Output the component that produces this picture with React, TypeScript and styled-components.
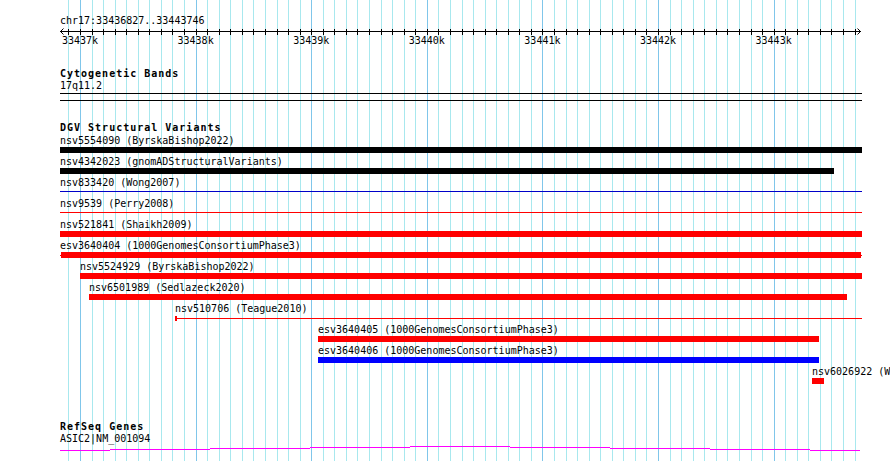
import * as React from 'react';
import styled, { createGlobalStyle } from 'styled-components';

const GlobalStyle = createGlobalStyle`
  html, body {
    margin: 0;
    padding: 0;
    background: #fff;
  }
  body {
    font-family: 'DejaVu Sans Mono', 'Liberation Mono', monospace;
    color: #000;
  }
`;

// browser window: chr17:33436827..33443746, drawn into 800px starting at x=60
const CHROM_START = 33436827;
const CHROM_END = 33443746;
const ORIGIN = 60;
const TRACK_WIDTH = 802;
const PX_PER_BP = 800 / (CHROM_END - CHROM_START + 1);
const toX = (bp: number) => ORIGIN + (bp - CHROM_START) * PX_PER_BP;

const Page = styled.div`
  position: relative;
  width: 890px;
  height: 461px;
  overflow: hidden;
  background: #fff;
`;

const GridLayer = styled.svg`
  position: absolute;
  top: 0;
  left: 0;
  width: 890px;
  height: 461px;
`;

const Content = styled.div`
  position: relative;
  display: flex;
  flex-direction: column;
  padding-left: ${ORIGIN}px;
`;

const Label = styled.div<{ $top?: number }>`
  height: 10px;
  margin-top: ${p => p.$top || 0}px;
  font-size: 10px;
  line-height: 10px;
  white-space: nowrap;
`;

const TrackTitle = styled(Label)`
  font-weight: bold;
  letter-spacing: 1px;
`;

const RulerSvg = styled.svg`
  display: block;
  width: 830px;
  height: 20px;
  overflow: visible;
`;

const BandBox = styled.div`
  width: ${TRACK_WIDTH}px;
  height: 6px;
  margin-top: 2px;
  border-top: 1px solid #000;
  border-bottom: 1px solid #000;
`;

const Row = styled.div`
  display: flex;
  flex-direction: column;
  height: 21px;
`;

const BarSlot = styled.div`
  display: flex;
  padding-top: 1px;
`;

const Bar = styled.div<{ $color: string }>`
  height: 6px;
  background: ${p => p.$color};
`;

const Line = styled.div<{ $color: string }>`
  height: 1px;
  margin-top: 2px;
  background: ${p => p.$color};
`;

const Span = styled.div<{ $color: string; $h: number; $top: number }>`
  display: flex;
  height: ${p => p.$h}px;
  margin-top: ${p => p.$top}px;
  background: linear-gradient(${p => p.$color}, ${p => p.$color}) left center / 100% 1px no-repeat;
`;

const Block = styled.div<{ $color: string }>`
  height: 100%;
  background: ${p => p.$color};
`;

const GeneSvg = styled.svg`
  display: block;
  width: 830px;
  height: 10px;
`;

type Kind = 'bar' | 'line' | 'inset' | 'tick';

interface Variant {
  name: string;
  x1: number;
  x2: number;
  color: string;
  kind: Kind;
}

const RED = '#ff0000';

const variants: Variant[] = [
  { name: 'nsv5554090 (ByrskaBishop2022)', x1: 60, x2: 862, color: '#000', kind: 'bar' },
  { name: 'nsv4342023 (gnomADStructuralVariants)', x1: 60, x2: 834, color: '#000', kind: 'bar' },
  { name: 'nsv833420 (Wong2007)', x1: 60, x2: 862, color: '#0000c8', kind: 'line' },
  { name: 'nsv9539 (Perry2008)', x1: 60, x2: 862, color: RED, kind: 'line' },
  { name: 'nsv521841 (Shaikh2009)', x1: 60, x2: 862, color: RED, kind: 'bar' },
  { name: 'esv3640404 (1000GenomesConsortiumPhase3)', x1: 60, x2: 862, color: RED, kind: 'inset' },
  { name: 'nsv5524929 (ByrskaBishop2022)', x1: 80, x2: 862, color: RED, kind: 'bar' },
  { name: 'nsv6501989 (Sedlazeck2020)', x1: 89, x2: 847, color: RED, kind: 'bar' },
  { name: 'nsv510706 (Teague2010)', x1: 175, x2: 862, color: RED, kind: 'tick' },
  { name: 'esv3640405 (1000GenomesConsortiumPhase3)', x1: 318, x2: 819, color: RED, kind: 'bar' },
  { name: 'esv3640406 (1000GenomesConsortiumPhase3)', x1: 318, x2: 819, color: '#0000ff', kind: 'bar' },
  { name: 'nsv6026922 (Wong2012)', x1: 812, x2: 824, color: RED, kind: 'bar' }
];

// ASIC2 gene line, drawn as stepped segments [x1, x2, y]
const geneSteps: [number, number, number][] = [
  [60, 110, 6],
  [110, 210, 5],
  [210, 310, 4],
  [310, 410, 3],
  [410, 510, 2],
  [510, 610, 3],
  [610, 710, 4],
  [710, 810, 5],
  [810, 860, 6]
];

function gridPositions() {
  const out: { x: number; major: boolean; bp: number }[] = [];
  const first = Math.ceil(CHROM_START / 100) * 100;
  for (let bp = first; bp <= CHROM_END; bp += 100) {
    out.push({ x: Math.round(toX(bp)), major: bp % 1000 === 0, bp });
  }
  return out;
}

const Feature = ({ v }: { v: Variant }) => {
  const style = { marginLeft: v.x1 - ORIGIN, width: v.x2 - v.x1 };
  if (v.kind === 'line') return <Line $color={v.color} style={style} />;
  if (v.kind === 'inset') {
    return (
      <Span $color={v.color} $h={6} $top={0} style={style}>
        <Block $color={v.color} style={{ marginLeft: 1, width: v.x2 - v.x1 - 2 }} />
      </Span>
    );
  }
  if (v.kind === 'tick') {
    return (
      <Span $color={v.color} $h={5} $top={1} style={style}>
        <Block $color={v.color} style={{ width: 2 }} />
      </Span>
    );
  }
  return <Bar $color={v.color} style={style} />;
};

export default function App() {
  const grid = gridPositions();

  return (
    <Page>
      <GlobalStyle />
      <GridLayer>
        {grid.map(g => (
          <rect key={g.bp} x={g.x} y={0} width={1} height={461} fill={g.major ? '#80c6ea' : '#a8e8ee'} />
        ))}
      </GridLayer>
      <Content>
        <Label $top={16}>chr17:33436827..33443746</Label>
        <RulerSvg>
          <rect x={0} y={5} width={801} height={1} fill="#000" />
          <path d="M3.5 2.5 L0.5 5.5 L3.5 8.5" stroke="#000" fill="none" />
          <path d="M797.5 2.5 L800.5 5.5 L797.5 8.5" stroke="#000" fill="none" />
          {grid.map(g => (
            <rect key={g.bp} x={g.x - ORIGIN} y={3} width={1} height={6} fill="#000" />
          ))}
          {grid
            .filter(g => g.major)
            .map(g => (
              <text
                key={g.bp}
                x={toX(g.bp) - ORIGIN}
                y={18}
                textAnchor="middle"
                fontSize={10}
                fontFamily="'DejaVu Sans Mono', monospace"
              >
                {g.bp / 1000}k
              </text>
            ))}
        </RulerSvg>

        <TrackTitle $top={23}>Cytogenetic Bands</TrackTitle>
        <Label $top={2}>17q11.2</Label>
        <BandBox />

        <TrackTitle $top={22}>DGV Structural Variants</TrackTitle>
        <div style={{ height: 3 }} />
        {variants.map(v => (
          <Row key={v.name}>
            <Label style={{ marginLeft: v.x1 - ORIGIN }}>{v.name}</Label>
            <BarSlot>
              <Feature v={v} />
            </BarSlot>
          </Row>
        ))}

        <TrackTitle $top={34}>RefSeq Genes</TrackTitle>
        <Label $top={2}>ASIC2|NM_001094</Label>
        <GeneSvg>
          {geneSteps.map(([x1, x2, y]) => (
            <rect key={x1} x={x1 - ORIGIN} y={y} width={x2 - x1} height={1} fill="#ff00ff" />
          ))}
        </GeneSvg>
      </Content>
    </Page>
  );
}
